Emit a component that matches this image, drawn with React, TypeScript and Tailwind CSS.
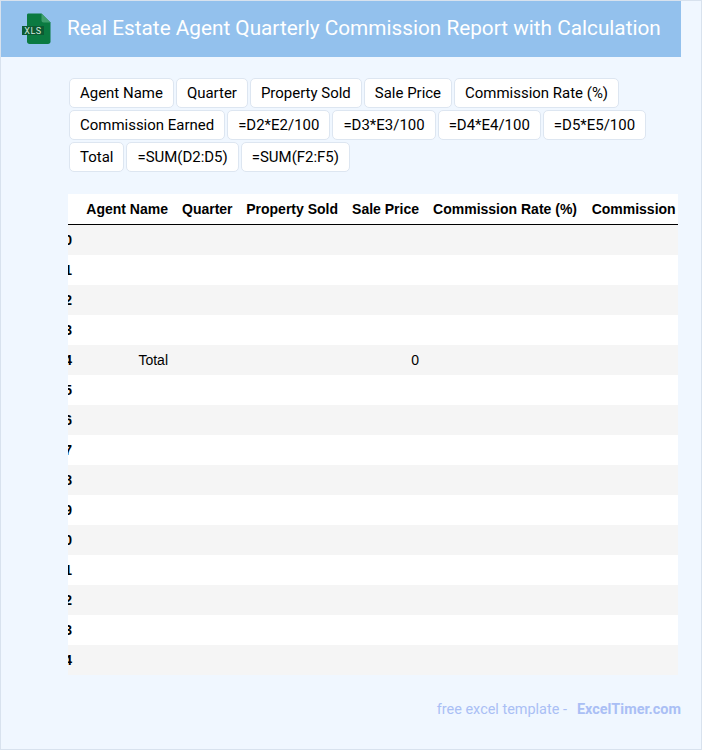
const chipRows = [
  "Agent Name",
  "Quarter",
  "Property Sold",
  "Sale Price",
  "Commission Rate (%)",
  "Commission Earned",
  "=D2*E2/100",
  "=D3*E3/100",
  "=D4*E4/100",
  "=D5*E5/100",
  "Total",
  "=SUM(D2:D5)",
  "=SUM(F2:F5)",
];

const headers = [
  { label: "Agent Name", w: "w-[96px]" },
  { label: "Quarter", w: "w-[64px]" },
  { label: "Property Sold", w: "w-[106px]" },
  { label: "Sale Price", w: "w-[81px]" },
  { label: "Commission Rate (%)", w: "w-[158px]" },
  { label: "Commission Earned", w: "w-[150px]" },
];

const rows = Array.from({ length: 15 }, (_, i) => i);

function XlsIcon() {
  return (
    <svg width="30" height="32" viewBox="0 0 30 32" className="block">
      <path d="M6.5 0.5H19.5L28.5 9.5V28.5C28.5 30 27.5 31 26 31H7.5C6 31 5 30 5 28.5V2C5 1 5.5 0.5 6.5 0.5Z" fill="#0b7a41" />
      <path d="M19.5 0.5L28.5 9.5H21.5C20.4 9.5 19.5 8.6 19.5 7.5Z" fill="#3f9f6d" />
      <rect x="0" y="13" width="22" height="9" fill="#0c5a33" />
      <text x="11" y="20.5" textAnchor="middle" fontSize="9" fontFamily="Roboto, sans-serif" fill="#d5e9dd" letterSpacing="0.5">XLS</text>
    </svg>
  );
}

export default function App() {
  return (
    <div className="w-[702px] h-[750px] box-border border border-[#d8e2ee] bg-[#f0f7ff] font-['Roboto',sans-serif] overflow-hidden">
      <header className="w-[680px] h-[56px] bg-[#93c1ed] flex items-center">
        <div className="ml-[21px] w-[45px] shrink-0">
          <XlsIcon />
        </div>
        <h1 className="text-[20.75px] leading-[28px] mt-[-2px] font-normal text-white whitespace-nowrap">
          Real Estate Agent Quarterly Commission Report with Calculation
        </h1>
      </header>

      <div className="ml-[68px] mt-[21px] w-[612px] flex flex-wrap gap-[2px]">
        {chipRows.map((c) => (
          <span
            key={c}
            className="h-[30px] px-[10px] box-border flex items-center bg-white border border-[#dde6f1] rounded-[5px] text-[14.98px] text-black whitespace-nowrap"
          >
            {c}
          </span>
        ))}
      </div>

      <div className="ml-[67px] mt-[22px] w-[610px] overflow-hidden">
        <table className="ml-[-29px] table-fixed border-separate border-spacing-0 w-[695px] text-[14px] text-black font-['Liberation_Sans',sans-serif]">
          <thead>
            <tr className="bg-white h-[31px]">
              <th className="w-[40px] border-b border-black"></th>
              {headers.map((h) => (
                <th
                  key={h.label}
                  className={`${h.w} px-[7px] text-right font-bold whitespace-nowrap border-b border-black`}
                >
                  {h.label}
                </th>
              ))}
            </tr>
          </thead>
          <tbody>
            {rows.map((r) => (
              <tr key={r} className={`h-[30px] ${r % 2 === 0 ? "bg-[#f5f5f5]" : "bg-white"}`}>
                <th className="px-[7px] text-right font-bold">{r}</th>
                <td className="px-[7px] text-right">{r === 4 ? "Total" : ""}</td>
                <td className="px-[7px]"></td>
                <td className="px-[7px]"></td>
                <td className="px-[7px] text-right">{r === 4 ? "0" : ""}</td>
                <td className="px-[7px]"></td>
                <td className="px-[7px]"></td>
              </tr>
            ))}
          </tbody>
        </table>
      </div>

      <footer className="mt-[26px] w-[680px] flex justify-end items-center h-[18px] text-[14.45px] text-[#aabff5]">
        <span>free excel template -</span>
        <span className="ml-[10px] font-bold">ExcelTimer.com</span>
      </footer>
    </div>
  );
}
